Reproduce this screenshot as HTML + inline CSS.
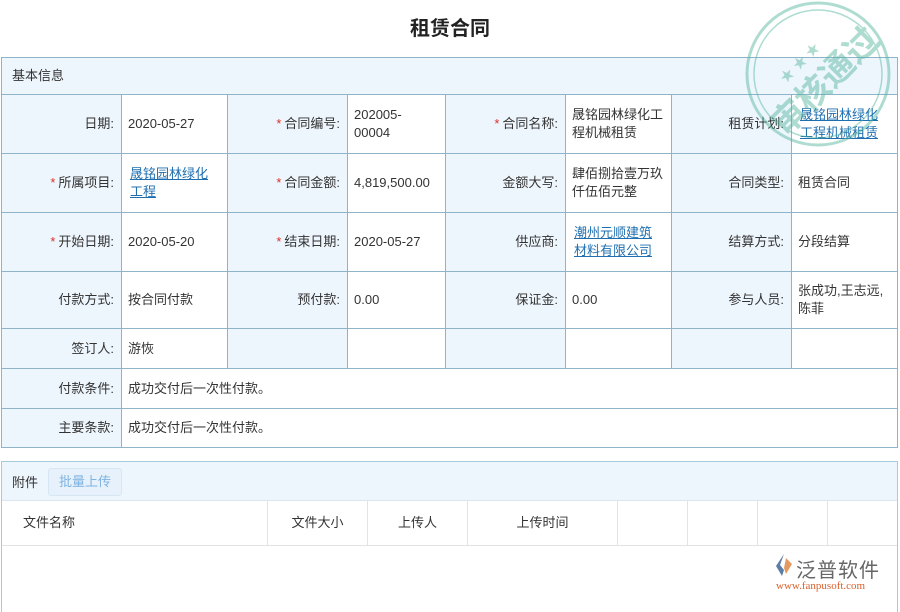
<!DOCTYPE html>
<html><head><meta charset="utf-8"><style>
body{margin:0;width:900px;height:600px;background:#fff;font-family:"Liberation Sans","Noto Sans CJK SC",sans-serif;font-size:13px;color:#333;overflow:hidden;position:relative}
h1{position:absolute;top:12px;left:0;width:900px;text-align:center;margin:0;font-size:20px;font-weight:bold;color:#222}
table{position:absolute;left:1px;top:57px;border-collapse:collapse;table-layout:fixed;width:896px}
td{border:1px solid #8fb3c9;padding:0 6px;line-height:18px;vertical-align:middle;white-space:nowrap}
td.l{background:#eef6fd;text-align:right;padding-right:7px}
td.v{background:#fff}
.s{color:#d9302c;margin-right:3px}
a{color:#1f6fb0;text-decoration:underline}
.hd{background:#eef6fd;height:36px;padding-left:10px}
.att{position:absolute;left:1px;top:461px;width:895px;height:150px;border:1px solid #a9c9dd;border-bottom:none}
.ah{height:38px;background:#eef6fd;border-bottom:1px solid #dde6ee;position:relative}
.ah span{position:absolute;left:10px;top:10px}
.btn{position:absolute;left:46px;top:6px;width:72px;height:26px;border:1px solid #d6e6f3;background:#e6f1fb;color:#7fb3e0;border-radius:3px;text-align:center;line-height:26px}
.th{position:absolute;top:39px;height:44px;border-right:1px solid #e3e3e3;border-bottom:1px solid #e3e3e3;line-height:44px;text-align:center}
</style></head><body>
<h1>租赁合同</h1>
<table>
<colgroup><col style="width:120px"><col style="width:106px"><col style="width:120px"><col style="width:98px"><col style="width:120px"><col style="width:106px"><col style="width:120px"><col style="width:106px"></colgroup>
<tr style="height:37px"><td colspan="8" class="hd">基本信息</td></tr>
<tr style="height:59px"><td class="l">日期:</td><td class="v">2020-05-27</td><td class="l"><span class="s">*</span>合同编号:</td><td class="v">202005-<br>00004</td><td class="l"><span class="s">*</span>合同名称:</td><td class="v">晟铭园林绿化工<br>程机械租赁</td><td class="l">租赁计划:</td><td class="v" style="padding-left:8px"><a>晟铭园林绿化<br>工程机械租赁</a></td></tr>
<tr style="height:59px"><td class="l"><span class="s">*</span>所属项目:</td><td class="v" style="padding-left:8px"><a>晟铭园林绿化<br>工程</a></td><td class="l"><span class="s">*</span>合同金额:</td><td class="v">4,819,500.00</td><td class="l">金额大写:</td><td class="v">肆佰捌拾壹万玖<br>仟伍佰元整</td><td class="l">合同类型:</td><td class="v">租赁合同</td></tr>
<tr style="height:59px"><td class="l"><span class="s">*</span>开始日期:</td><td class="v">2020-05-20</td><td class="l"><span class="s">*</span>结束日期:</td><td class="v">2020-05-27</td><td class="l">供应商:</td><td class="v" style="padding-left:8px"><a>潮州元顺建筑<br>材料有限公司</a></td><td class="l">结算方式:</td><td class="v">分段结算</td></tr>
<tr style="height:57px"><td class="l">付款方式:</td><td class="v">按合同付款</td><td class="l">预付款:</td><td class="v">0.00</td><td class="l">保证金:</td><td class="v">0.00</td><td class="l">参与人员:</td><td class="v">张成功,王志远,<br>陈菲</td></tr>
<tr style="height:40px"><td class="l">签订人:</td><td class="v">游恢</td><td class="l"></td><td class="v"></td><td class="l"></td><td class="v"></td><td class="l"></td><td class="v"></td></tr>
<tr style="height:40px"><td class="l">付款条件:</td><td class="v" colspan="7">成功交付后一次性付款。</td></tr>
<tr style="height:39px"><td class="l">主要条款:</td><td class="v" colspan="7">成功交付后一次性付款。</td></tr>
</table>
<div class="att">
<div class="ah"><span>附件</span><div class="btn">批量上传</div></div>
<div class="th" style="left:0;width:265px;text-align:left"><span style="margin-left:21px">文件名称</span></div>
<div class="th" style="left:266px;width:99px">文件大小</div>
<div class="th" style="left:366px;width:99px">上传人</div>
<div class="th" style="left:466px;width:149px">上传时间</div>
<div class="th" style="left:616px;width:69px"></div>
<div class="th" style="left:686px;width:69px"></div>
<div class="th" style="left:756px;width:69px"></div>
<div class="th" style="left:826px;width:69px;border-right:none"></div>
</div>
<div style="position:absolute;left:772px;top:552px;width:20px;height:26px">
<svg width="22" height="26"><path d="M12 2 L4 14 L10 24 L12 18 L8 13 Z" fill="#5b7fa8"/><path d="M14 6 L20 12 L14 22 L12 16 Z" fill="#e39a62"/></svg></div>
<div style="position:absolute;left:796px;top:554px;font-size:20px;color:#666;letter-spacing:1px">泛普软件</div>
<div style="position:absolute;left:776px;top:580px;font-family:'Liberation Serif',serif;font-size:11px;color:#d9602c">www.fanpusoft.com</div>
<svg style="position:absolute;left:743px;top:0px;opacity:.45" width="150" height="150" viewBox="0 0 150 150">
<circle cx="75" cy="74" r="71" fill="none" stroke="#4fb39a" stroke-width="3"/>
<circle cx="75" cy="74" r="64" fill="none" stroke="#4fb39a" stroke-width="1.5"/>
<g transform="rotate(-45 75 74)"><text x="75" y="96" text-anchor="middle" font-size="34" font-weight="bold" fill="#4fb39a" font-family="Noto Sans CJK SC,sans-serif">审核通过</text>
<text x="70" y="58" text-anchor="middle" font-size="14" fill="#4fb39a">★ ★ ★</text></g>
</svg>
</body></html>
